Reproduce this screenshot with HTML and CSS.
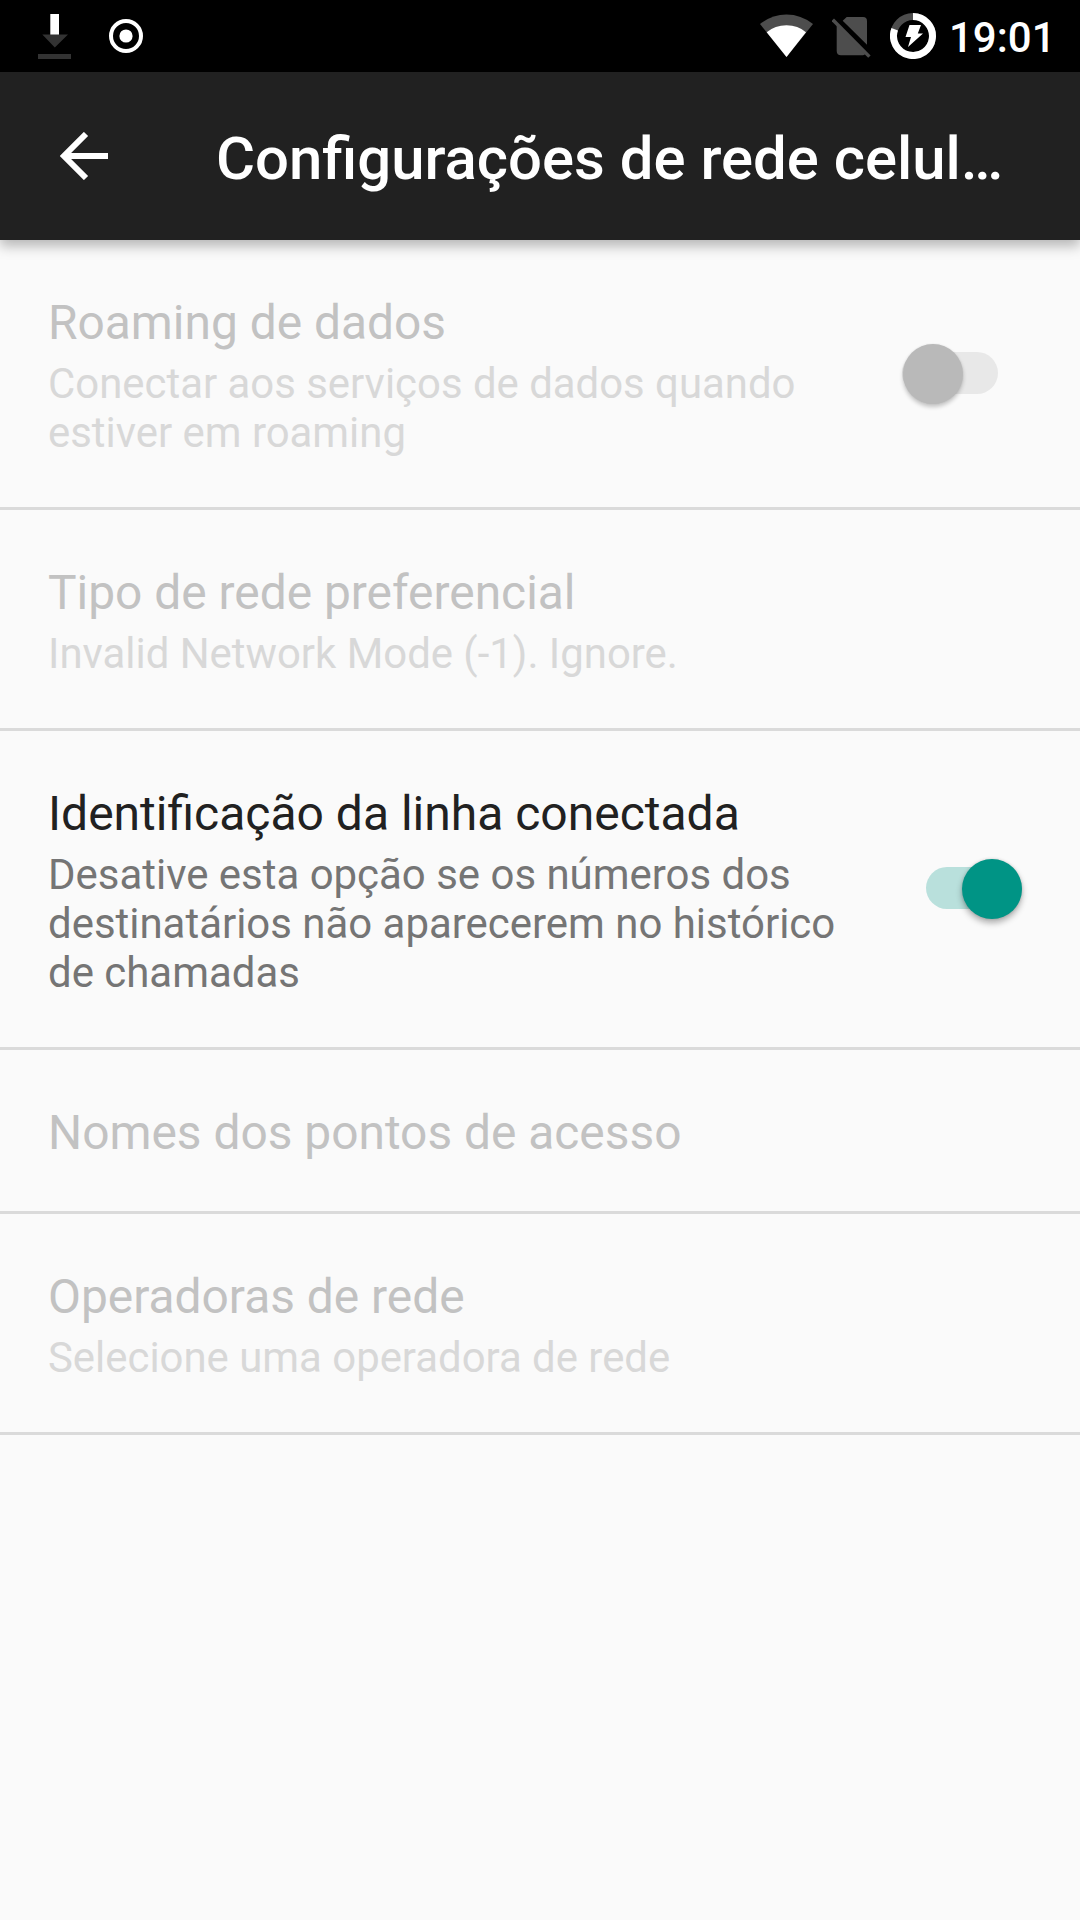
FILE: index.html
```html
<!DOCTYPE html>
<html lang="pt-BR">
<head>
<meta charset="utf-8">
<title>Configurações de rede celular</title>
<link rel="stylesheet" href="styles.css">
</head>
<body>
<div class="status-bar">
  <svg class="download" width="34" height="46" viewBox="0 0 34 46"><path fill="#fff" d="M12.3 0H21V21H12.3z"/><path fill="#333" d="M4.3 20.5H30L16.8 33.5zM0 40H33V45H0z"/></svg>
  <svg class="record" width="36" height="36" viewBox="0 0 36 36"><circle cx="18" cy="18" r="15" fill="none" stroke="#fff" stroke-width="4"/><circle cx="18" cy="18" r="6.6" fill="#fff"/></svg>
  <svg class="wifi" width="54" height="44" viewBox="0 0 54 44"><path fill="#4d4d4d" d="M0 10Q12 .5 26.5 .5T53 10L26.5 43z"/><path fill="#fff" d="M6.7 18.3Q15 11.3 26.5 11.3T46 18.3L26.5 43z"/></svg>
  <svg class="no-sim" width="40" height="42" viewBox="0 0 40 42"><path fill="#4d4d4d" d="M10.7 3.7 14.7 0H31Q35 0 35 4V27.700zM4.700 7 34 37 31 38.200H9Q4.700 38.200 4.700 34z"/><path stroke="#4d4d4d" stroke-width="3.400" d="M.8 2.800 37.400 39.600"/></svg>
  <svg class="battery" width="46" height="46" viewBox="0 0 46 46"><circle cx="23" cy="23" r="19.500" fill="none" stroke="#4d4d4d" stroke-width="7"/><path fill="none" stroke="#fff" stroke-width="7" d="M23 3.500A19.500 19.500 0 1 1 4.700 16.200"/><path fill="#fff" d="M19.500 12H31L27.800 20.500H33L18 34 21 24H15.500z"/></svg>
  <span class="clock">19:01</span>
</div>
<header class="app-bar">
  <svg class="back" width="48" height="48" viewBox="0 0 48 48"><path fill="none" stroke="#fff" stroke-width="6" d="M48 24H5M26 2 4 24 26 46"/></svg>
  <h1>Configurações de rede celul…</h1>
</header>
<main>
  <section class="row disabled">
    <div class="text"><h2>Roaming de dados</h2><p>Conectar aos serviços de dados quando<br>estiver em roaming</p></div>
    <div class="switch"><span class="thumb"></span></div>
  </section>
  <section class="row disabled">
    <div class="text"><h2>Tipo de rede preferencial</h2><p>Invalid Network Mode (-1). Ignore.</p></div>
  </section>
  <section class="row">
    <div class="text"><h2>Identificação da linha conectada</h2><p>Desative esta opção se os números dos<br>destinatários não aparecerem no histórico<br>de chamadas</p></div>
    <div class="switch on"><span class="thumb"></span></div>
  </section>
  <section class="row disabled">
    <div class="text"><h2>Nomes dos pontos de acesso</h2></div>
  </section>
  <section class="row disabled">
    <div class="text"><h2>Operadoras de rede</h2><p>Selecione uma operadora de rede</p></div>
  </section>
</main>
</body>
</html>
```
FILE: styles.css
```css
* { box-sizing: border-box; margin: 0; }
body { width: 1080px; height: 1920px; background: #fafafa; font-family: Roboto, sans-serif; overflow: hidden; }
svg { display: block; flex: none; }
.status-bar { height: 72px; background: #000; display: flex; align-items: flex-start; padding-left: 38px; }
.download { margin-top: 14px; }
.record { margin: 18px 0 0 36px; }
.wifi { margin: 14px 0 0 616px; }
.no-sim { margin: 17px 0 0 18px; }
.battery { margin: 13px 0 0 18px; }
.clock { margin: 13px 0 0 13px; font-size: 42px; line-height: 50px; font-weight: 500; color: #fff; white-space: nowrap; }
.app-bar { position: relative; height: 168px; background: #212121; display: flex; align-items: center; padding-left: 60px; box-shadow: 0 6px 12px rgba(0,0,0,.28); }
.app-bar h1 { margin-left: 108px; padding-top: 5px; font-size: 59.85px; line-height: 70px; font-weight: 500; color: #fff; white-space: nowrap; }
.row { border-bottom: 3px solid #dadada; padding: 54px 48px 50px; display: flex; align-items: center; justify-content: space-between; }
h2 { font-size: 48px; line-height: 57px; font-weight: 400; color: #212121; white-space: nowrap; }
p { margin-top: 8px; font-size: 41.95px; line-height: 49px; color: #757575; white-space: nowrap; }
.disabled h2 { height: 57px; padding-top: 1px; font-size: 47.88px; color: #c2c2c2; }
.disabled p { font-size: 41.9px; color: #d8d8d8; }
.switch { width: 96px; height: 42px; border-radius: 21px; background: #e8e8e8; display: flex; align-items: center; margin: 0 34px 5px 0; flex: none; }
.thumb { width: 60px; height: 60px; margin: 1px .5px 0; border-radius: 50%; background: #b9b9b9; flex: none; box-shadow: 0 3px 4px rgba(0,0,0,.22), 0 0 2px rgba(0,0,0,.08); }
.switch.on { background: #b9e0dc; justify-content: flex-end; margin: 0 10px 6px 0; }
.on .thumb { background: #009485; box-shadow: 0 4px 6px rgba(0,0,0,.3), 0 0 3px rgba(0,0,0,.15); }
```
